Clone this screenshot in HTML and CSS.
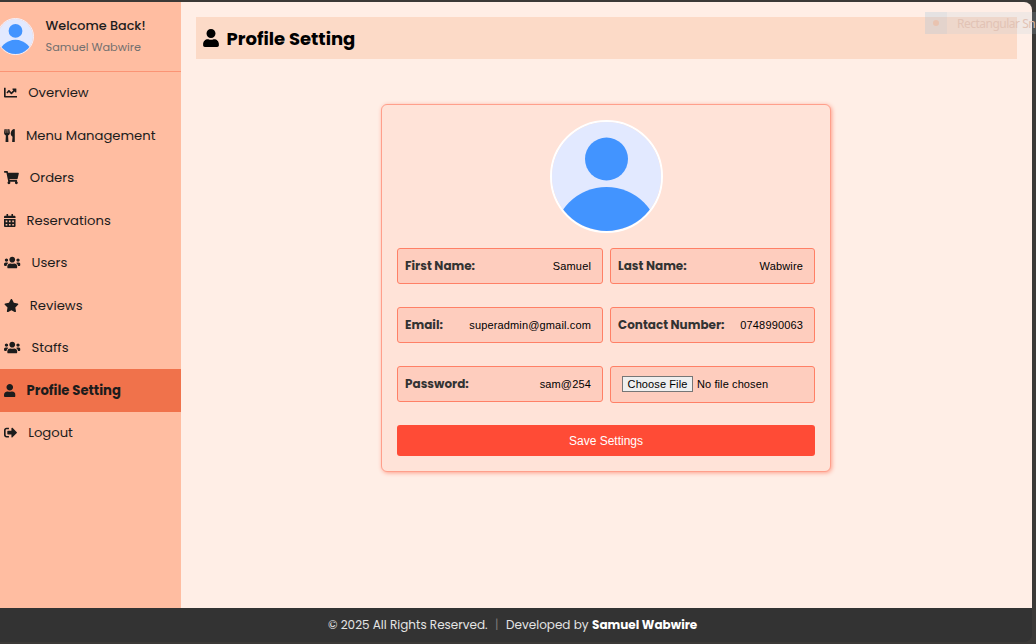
FILE: index.html
```html
<!DOCTYPE html>
<html lang="en">
<head>
<meta charset="utf-8">
<title>Profile Setting</title>
<link rel="stylesheet" href="styles.css">
</head>
<body>
<svg class="defs" aria-hidden="true">
  <symbol id="user" viewBox="0 0 448 512"><path d="M224 256c70.7 0 128-57.3 128-128S294.7 0 224 0 96 57.3 96 128s57.3 128 128 128zm89.6 32h-16.7c-22.2 10.2-46.9 16-72.9 16s-50.6-5.8-72.9-16h-16.7C60.2 288 0 348.2 0 422.4V464c0 26.5 21.5 48 48 48h352c26.5 0 48-21.5 48-48v-41.6c0-74.2-60.2-134.4-134.4-134.4z"/></symbol>
  <symbol id="users" viewBox="0 0 640 512"><path d="M96 224c35.3 0 64-28.7 64-64s-28.7-64-64-64-64 28.7-64 64 28.7 64 64 64zm448 0c35.3 0 64-28.7 64-64s-28.7-64-64-64-64 28.7-64 64 28.7 64 64 64zm32 32h-64c-17.6 0-33.5 7.1-45.1 18.6 40.3 22.1 68.9 62 75.1 109.4h66c17.7 0 32-14.3 32-32v-32c0-35.3-28.7-64-64-64zm-256 0c61.9 0 112-50.1 112-112S381.9 32 320 32 208 82.1 208 144s50.1 112 112 112zm76.8 32h-8.3c-20.8 10-43.9 16-68.5 16s-47.6-6-68.5-16h-8.3C179.6 288 128 339.6 128 403.2V432c0 26.5 21.5 48 48 48h288c26.5 0 48-21.5 48-48v-28.8c0-63.6-51.6-115.2-115.2-115.2zm-223.7-13.4C161.5 263.1 145.6 256 128 256H64c-35.3 0-64 28.7-64 64v32c0 17.7 14.3 32 32 32h65.9c6.3-47.4 34.9-87.3 75.2-109.4z"/></symbol>
  <symbol id="avatar" viewBox="0 0 109 109"><rect width="109" height="109" fill="#e2e9ff"/><circle cx="54.5" cy="37" r="21.5" fill="#4294ff"/><circle cx="54.5" cy="118" r="53" fill="#4294ff"/></symbol>
</svg>
<div class="page">
  <aside class="sidebar">
    <div class="welcome">
      <svg class="face small"><use href="#avatar"/></svg>
      <div class="who"><span class="hello">Welcome Back!</span><span class="name">Samuel Wabwire</span></div>
    </div>
    <nav class="menu">
      <a class="item"><svg class="icon w16" viewBox="0 0 512 512"><path d="M496 384H64V80c0-8.84-7.16-16-16-16H16C7.16 64 0 71.16 0 80v336c0 17.67 14.33 32 32 32h464c8.84 0 16-7.16 16-16v-32c0-8.84-7.16-16-16-16zM464 96H345.94c-21.38 0-32.09 25.85-16.97 40.97l32.4 32.4L288 242.75l-73.37-73.37c-12.5-12.5-32.76-12.5-45.25 0l-68.69 68.69c-6.25 6.25-6.25 16.38 0 22.63l22.62 22.62c6.25 6.25 16.38 6.25 22.63 0L192 237.25l73.37 73.37c12.5 12.5 32.76 12.5 45.25 0l96-96 32.4 32.4c15.12 15.12 40.97 4.41 40.97-16.97V112c.01-8.84-7.15-16-15.99-16z"/></svg><span>Overview</span></a>
      <a class="item"><svg class="icon w13" viewBox="0 0 416 512"><path d="M207.9 15.2c.8 4.7 16.1 94.5 16.1 128.8 0 52.3-27.8 89.6-68.9 104.6L168 486.7c.7 13.7-10.2 25.3-24 25.3H80c-13.7 0-24.7-11.5-24-25.3l12.9-238.1C27.7 233.6 0 196.2 0 144 0 109.6 15.3 19.9 16.1 15.2 19.3-5.1 61.4-5.4 64 16.3v141.2c1.3 3.4 15.1 3.2 16 0 1.4-25.3 7.9-139.2 8-141.8 3.3-20.8 44.7-20.8 47.9 0 .2 2.7 6.6 116.5 8 141.8.9 3.2 14.8 3.4 16 0V16.3c2.6-21.6 44.8-21.4 48-1.1zm119.2 285.7l-15 185.1c-1.2 14 9.900 26 23.900 26h56c13.300 0 24-10.700 24-24V24c0-13.200-10.700-24-24-24-82.500 0-221.400 178.500-64.900 300.900z"/></svg><span>Menu Management</span></a>
      <a class="item"><svg class="icon w18" viewBox="0 0 576 512"><path d="M528.12 301.319l47.273-208C578.806 78.301 567.391 64 551.99 64H159.208l-9.166-44.81C147.758 8.021 137.93 0 126.529 0H24C10.745 0 0 10.745 0 24v16c0 13.255 10.745 24 24 24h69.883l70.248 343.435C147.325 417.1 136 435.222 136 456c0 30.928 25.072 56 56 56s56-25.072 56-56c0-15.674-6.447-29.835-16.824-40h209.647C430.447 426.165 424 440.326 424 456c0 30.928 25.072 56 56 56s56-25.072 56-56c0-22.172-12.888-41.332-31.579-50.405l5.517-24.276c3.413-15.018-8.002-29.319-23.403-29.319H218.117l-6.545-32h293.145c11.206 0 20.92-7.754 23.403-18.681z"/></svg><span>Orders</span></a>
      <a class="item"><svg class="icon w14" viewBox="0 0 448 512"><path fill-rule="evenodd" d="M0 464c0 26.500 21.500 48 48 48h352c26.500 0 48-21.500 48-48V192H0zM64 256h64v64H64zm128 0h64v64h-64zm128 0h64v64h-64zM64 384h64v64H64zm128 0h64v64h-64zm128 0h64v64h-64zM400 64h-48V16c0-8.800-7.200-16-16-16h-32c-8.800 0-16 7.200-16 16v48H160V16c0-8.800-7.200-16-16-16h-32c-8.800 0-16 7.200-16 16v48H48C21.500 64 0 85.500 0 112v48h448v-48c0-26.500-21.500-48-48-48z"/></svg><span>Reservations</span></a>
      <a class="item"><svg class="icon w20"><use href="#users"/></svg><span>Users</span></a>
      <a class="item"><svg class="icon w18" viewBox="0 0 576 512"><path d="M259.3 17.8L194 150.2 47.9 171.5c-26.2 3.8-36.7 36.1-17.7 54.6l105.700 103-25 145.500c-4.500 26.300 23.200 46 46.400 33.700L288 439.600l130.700 68.700c23.200 12.200 50.900-7.400 46.400-33.700l-25-145.500 105.700-103c19-18.500 8.500-50.800-17.700-54.600L382 150.200 316.700 17.800c-11.700-23.600-45.600-23.900-57.400 0z"/></svg><span>Reviews</span></a>
      <a class="item"><svg class="icon w20"><use href="#users"/></svg><span>Staffs</span></a>
      <a class="item active"><svg class="icon w14"><use href="#user"/></svg><span>Profile Setting</span></a>
      <a class="item"><svg class="icon w16" viewBox="0 0 512 512"><path d="M497 273L329 441c-15 15-41 4.500-41-17v-96H152c-13.300 0-24-10.700-24-24v-96c0-13.300 10.700-24 24-24h136V88c0-21.400 25.900-32 41-17l168 168c9.300 9.400 9.300 24.600 0 34zM192 436v-40c0-6.600-5.400-12-12-12H96c-17.700 0-32-14.300-32-32V160c0-17.700 14.300-32 32-32h84c6.600 0 12-5.400 12-12V76c0-6.600-5.400-12-12-12H96c-53 0-96 43-96 96v192c0 53 43 96 96 96h84c6.600 0 12-5.400 12-12z"/></svg><span>Logout</span></a>
    </nav>
  </aside>
  <main class="content">
    <h1 class="title"><svg class="title-icon"><use href="#user"/></svg><span>Profile Setting</span></h1>
    <form class="card">
      <svg class="face large"><use href="#avatar"/></svg>
      <div class="fields">
        <div class="field"><span class="label">First Name:</span><span class="value">Samuel</span></div>
        <div class="field"><span class="label">Last Name:</span><span class="value">Wabwire</span></div>
        <div class="field"><span class="label">Email:</span><span class="value">superadmin@gmail.com</span></div>
        <div class="field"><span class="label">Contact Number:</span><span class="value">0748990063</span></div>
        <div class="field"><span class="label">Password:</span><span class="value">sam@254</span></div>
        <div class="field upload"><span class="choose">Choose File</span><span class="chosen">No file chosen</span></div>
      </div>
      <button class="save" type="button">Save Settings</button>
    </form>
  </main>
</div>
<footer class="footer"><span class="rights">© 2025 All Rights Reserved.</span><span class="bar">|</span><span class="dev">Developed by</span><b class="author">Samuel Wabwire</b></footer>
<div class="snip"><span class="snip-icon"><i class="dot"></i></span><span class="snip-text">Rectangular Sn</span></div>
</body>
</html>
```
FILE: styles.css
```css
* { box-sizing: border-box; }
body {
  margin: 0;
  width: 1036px;
  height: 644px;
  padding-top: 2px;
  overflow: hidden;
  position: relative;
  background: #3b3937;
  font-family: Poppins, Inter, "Open Sans", sans-serif;
  font-size: 13.2px;
  color: #1c1c1c;
}
.defs { display: none; }
.page {
  display: flex;
  width: 1032px;
  height: 606px;
  background: #ffeee6;
  border-radius: 0 8px 0 0;
  overflow: hidden;
}
.sidebar { width: 181px; background: #ffbda1; }
.welcome {
  display: flex;
  height: 70px;
  padding-top: 16px;
  border-bottom: 1px solid #fb9475;
}
.face { display: block; border: 2px solid #fff; border-radius: 50%; }
.small { width: 37px; height: 37px; margin-left: -3px; border: 1px solid #f4f0fa; flex: none; }
.who { display: flex; flex-direction: column; margin-left: 11.5px; line-height: 21px; margin-top: -3px; white-space: nowrap; }
.hello { font-weight: 500; font-size: 12.800px; }
.name { color: #73706f; font-size: 11.300px; line-height: 22px; }
.menu { display: flex; flex-direction: column; margin-top: -.2px; }
.item { display: flex; align-items: center; gap: 11px; height: 42.5px; padding-left: 4px; white-space: nowrap; }
.active { background: #f0724b; font-weight: 700; }
.icon { height: 13.200px; fill: #1c1c1c; flex: none; }
.w13 { width: 10.900px; }
.w14 { width: 11.550px; }
.w16 { width: 13.200px; }
.w18 { width: 14.850px; }
.w20 { width: 16.500px; }
.content { flex: 1; padding: 15px; display: flex; flex-direction: column; align-items: center; }
.title {
  align-self: stretch;
  display: flex;
  align-items: center;
  gap: 7.500px;
  height: 42px;
  margin: 0 0 45px;
  padding-left: 7px;
  background: #fcdac7;
  color: #000;
  font-size: 18px;
  font-weight: 700;
}
.title-icon { width: 16px; height: 18px; }
.card {
  width: 450px;
  height: 368px;
  margin-right: 1px;
  padding: 15px;
  border: 1px solid #ff9f8b;
  border-radius: 6px;
  background: #ffe3d8;
  box-shadow: 1px 1px 4px #ff9f8b;
  display: flex;
  flex-direction: column;
}
.large { width: 113px; height: 113px; margin: 0 152px 15px 153px; flex: none; }
.fields { display: grid; grid-template-columns: 206px 205px; column-gap: 7px; row-gap: 23px; }
.field {
  height: 36px;
  display: flex;
  align-items: center;
  justify-content: space-between;
  padding: 0 11px 0 7px;
  border: 1px solid #ff8066;
  border-radius: 3px;
  background: #fecdbe;
  color: #000;
  white-space: nowrap;
}
.label { font-size: 12px; font-weight: 700; color: #333; }
.value, .choose, .chosen, .save { font-family: Arial, "Liberation Sans", sans-serif; font-size: 11px; }
.value { letter-spacing: .15px; }
.upload { height: 37px; justify-content: flex-start; gap: 4px; padding: 0 0 2px 11px; }
.choose { height: 16px; line-height: 14px; width: 71px; text-align: center; background: #efefef; border: 1px solid #767676; letter-spacing: .1px; }
.chosen { letter-spacing: .1px; }
.save {
  height: 31px;
  margin-top: 22px;
  border: 0;
  border-radius: 3px;
  background: #ff4b36;
  color: #fff;
  font-size: 12px;
}
.footer {
  display: flex;
  align-items: center;
  width: 1032px;
  height: 34px;
  padding-left: 328px;
  background: #333;
  border-radius: 0 0 8px 0;
  color: #e4e4e4;
  font-size: 12px;
  white-space: nowrap;
}
.bar { margin: 0 7.500px; color: #777; }
.author { margin-left: 3.500px; color: #fff; }
.snip {
  position: absolute;
  left: 925px;
  top: 12px;
  width: 111px;
  height: 22px;
  display: flex;
  align-items: center;
  overflow: hidden;
  background: rgba(178, 205, 224, .18);
  white-space: nowrap;
}
.snip-icon { width: 22px; height: 22px; display: grid; place-items: center; background: rgba(150, 190, 215, .12); flex: none; }
.dot { width: 6px; height: 6px; border-radius: 50%; background: #e9c3b0; }
.snip-text { margin-left: 10px; font: 12px "Noto Sans", sans-serif; letter-spacing: -.5px; color: #e2c3b5; }
```
